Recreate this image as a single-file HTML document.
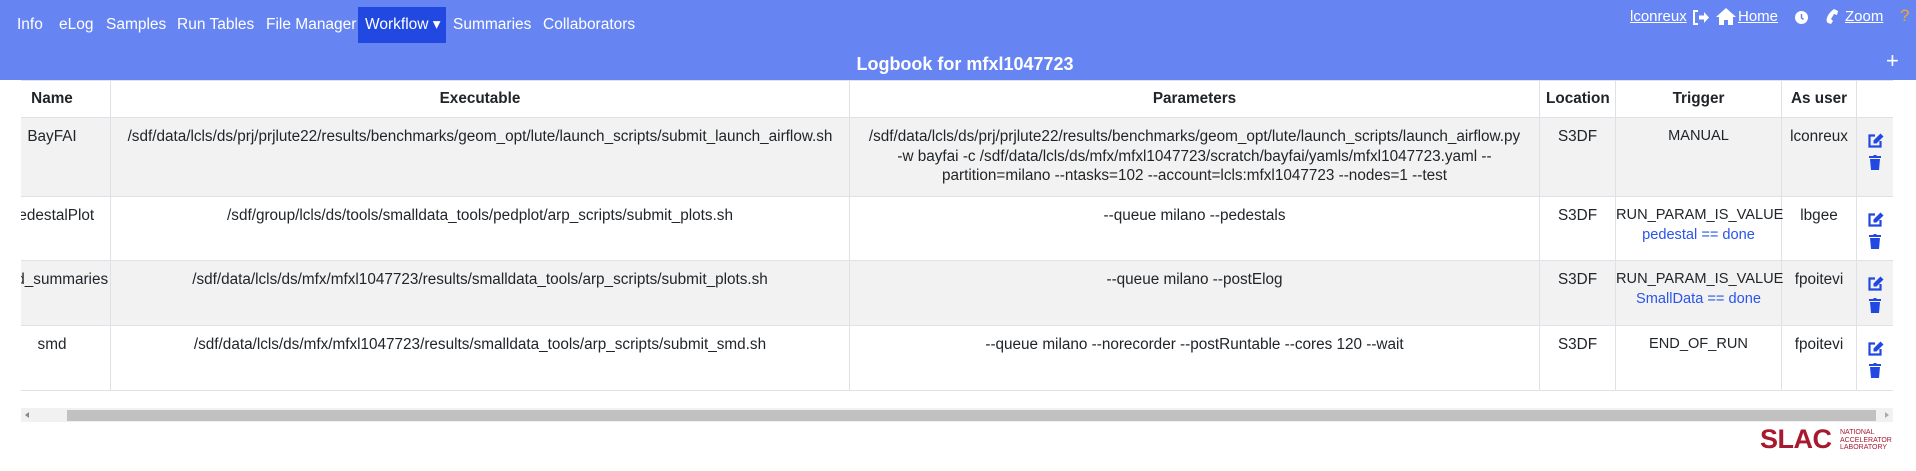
<!DOCTYPE html>
<html><head><meta charset="utf-8"><style>
*{box-sizing:border-box;margin:0;padding:0}
body{width:1916px;height:471px;background:#fff;font-family:"Liberation Sans",sans-serif;font-size:15.3px;color:#212529;position:relative;overflow:hidden}
.hdr{position:absolute;left:0;top:0;width:1916px;height:80px;background:#6685f3}
.nav{position:absolute;top:7px;height:36px;line-height:36px;color:#fff;font-size:15.5px}
.nav span{position:absolute;white-space:nowrap}
.wf{background:#2148e0;top:7px;height:36px;position:absolute;left:358px;width:88px}
.title{position:absolute;top:54px;left:0;width:1916px;text-align:center;color:#fff;font-weight:bold;font-size:18px;padding-left:14px}
.rt{position:absolute;top:8px;color:#fff;font-size:15px;text-decoration:underline;white-space:nowrap}
.wrap{position:absolute;left:21px;top:80px;width:1872px;height:311px;overflow:hidden}
table{border-collapse:collapse;position:absolute;left:-1px;top:0;width:1873px;table-layout:fixed}
td,th{border:1px solid #dee2e6;vertical-align:top;text-align:center;padding:9px 6px 0;line-height:19.5px}
th{height:37px;font-weight:bold;padding-top:8px}
tr.g td{background:#f2f2f2}
.nm{display:flex;justify-content:center;width:62px;white-space:nowrap;margin-left:-6px}
.b{color:#2a55e8}
.nw{white-space:nowrap;padding-left:0;padding-right:0}
.tg{font-size:14.6px}
.ic{display:block;margin:6px auto 0}
.sb{position:absolute;left:21px;top:408px;width:1872px;height:14px;background:#f1f1f1}
.th{position:absolute;left:46px;top:2px;width:1809px;height:11px;background:#c1c1c1}
</style></head><body>
<div class="hdr"></div>
<div class="wf"></div>
<div class="nav">
<span style="left:17px">Info</span><span style="left:59px">eLog</span><span style="left:106px">Samples</span><span style="left:177px">Run Tables</span><span style="left:266px">File Manager</span><span style="left:365px">Workflow ▾</span><span style="left:453px">Summaries</span><span style="left:543px">Collaborators</span>
</div>
<div class="rt" style="left:1630px">lconreux</div>
<svg style="position:absolute;left:1692px;top:10px" width="17" height="15" viewBox="0 0 17 15"><path d="M6 1H2v13h4" stroke="#fff" stroke-width="2" fill="none"/><path d="M7 5.5h5V2l5 5.5-5 5.5V9.5H7z" fill="#fff"/></svg>
<svg style="position:absolute;left:1716px;top:8px" width="20" height="17" viewBox="0 0 20 17"><path d="M10 0L0 9h3v8h5v-5h4v5h5V9h3z" fill="#fff"/></svg>
<div class="rt" style="left:1738px">Home</div>
<svg style="position:absolute;left:1795px;top:11px" width="13" height="13" viewBox="0 0 13 13"><circle cx="6.5" cy="6.5" r="6.5" fill="#fff"/><path d="M6.5 3v4l2 1.5" stroke="#6685f3" stroke-width="1.5" fill="none"/></svg>
<svg style="position:absolute;left:1823px;top:9px" width="16" height="16" viewBox="0 0 16 16"><path d="M11 0l4 2-1 4-3-1-3 5 2 2-2 3-3-1C2 12 4 5 11 0z" fill="#fff"/></svg>
<div class="rt" style="left:1845px">Zoom</div>
<div style="position:absolute;left:1900px;top:6px;color:#f5a623;font-size:17px">?</div>
<div class="title">Logbook for mfxl1047723</div>
<div style="position:absolute;left:1886px;top:48px;color:#fff;font-size:22px;font-weight:300">+</div>
<div class="wrap"><table>
<colgroup><col style="width:90px"><col style="width:739px"><col style="width:690px"><col style="width:76px"><col style="width:166px"><col style="width:75px"><col style="width:37px"></colgroup>
<tr><th><div class="nm">Name</div></th><th>Executable</th><th>Parameters</th><th>Location</th><th>Trigger</th><th>As user</th><th></th></tr>
<tr class="g" style="height:79px"><td><div class="nm">BayFAI</div></td><td class="nw">/sdf/data/lcls/ds/prj/prjlute22/results/benchmarks/geom_opt/lute/launch_scripts/submit_launch_airflow.sh</td><td class="nw">/sdf/data/lcls/ds/prj/prjlute22/results/benchmarks/geom_opt/lute/launch_scripts/launch_airflow.py<br>-w bayfai -c /sdf/data/lcls/ds/mfx/mfxl1047723/scratch/bayfai/yamls/mfxl1047723.yaml --<br>partition=milano --ntasks=102 --account=lcls:mfxl1047723 --nodes=1 --test</td><td>S3DF</td><td class="nw tg">MANUAL</td><td>lconreux</td><td><svg class="ic" width="17" height="16" viewBox="0 0 17 16"><path d="M8 2.5H2.5v11h11V8" stroke="#2148e0" stroke-width="2.2" fill="none"/><path d="M13.5 0.5l3 3-7 7H6.5v-3z" fill="#2148e0"/></svg><svg class="ic" style="margin-top:5px" viewBox="0 0 14 16" width="14" height="16"><path d="M1 2h4l1-1h2l1 1h4v2H1z M2 5h10l-1 11H3z" fill="#2148e0"/></svg></td></tr>
<tr style="height:64px"><td><div class="nm">pedestalPlot</div></td><td class="nw">/sdf/group/lcls/ds/tools/smalldata_tools/pedplot/arp_scripts/submit_plots.sh</td><td>--queue milano --pedestals</td><td>S3DF</td><td class="nw tg">RUN_PARAM_IS_VALUE<br><span class="b">pedestal == done</span></td><td>lbgee</td><td><svg class="ic" width="17" height="16" viewBox="0 0 17 16"><path d="M8 2.5H2.5v11h11V8" stroke="#2148e0" stroke-width="2.2" fill="none"/><path d="M13.5 0.5l3 3-7 7H6.5v-3z" fill="#2148e0"/></svg><svg class="ic" style="margin-top:5px" viewBox="0 0 14 16" width="14" height="16"><path d="M1 2h4l1-1h2l1 1h4v2H1z M2 5h10l-1 11H3z" fill="#2148e0"/></svg></td></tr>
<tr class="g" style="height:65px"><td><div class="nm">smd_summaries</div></td><td class="nw">/sdf/data/lcls/ds/mfx/mfxl1047723/results/smalldata_tools/arp_scripts/submit_plots.sh</td><td>--queue milano --postElog</td><td>S3DF</td><td class="nw tg">RUN_PARAM_IS_VALUE<br><span class="b">SmallData == done</span></td><td>fpoitevi</td><td><svg class="ic" width="17" height="16" viewBox="0 0 17 16"><path d="M8 2.5H2.5v11h11V8" stroke="#2148e0" stroke-width="2.2" fill="none"/><path d="M13.5 0.5l3 3-7 7H6.5v-3z" fill="#2148e0"/></svg><svg class="ic" style="margin-top:5px" viewBox="0 0 14 16" width="14" height="16"><path d="M1 2h4l1-1h2l1 1h4v2H1z M2 5h10l-1 11H3z" fill="#2148e0"/></svg></td></tr>
<tr style="height:65px"><td><div class="nm">smd</div></td><td class="nw">/sdf/data/lcls/ds/mfx/mfxl1047723/results/smalldata_tools/arp_scripts/submit_smd.sh</td><td>--queue milano --norecorder --postRuntable --cores 120 --wait</td><td>S3DF</td><td class="nw tg">END_OF_RUN</td><td>fpoitevi</td><td><svg class="ic" width="17" height="16" viewBox="0 0 17 16"><path d="M8 2.5H2.5v11h11V8" stroke="#2148e0" stroke-width="2.2" fill="none"/><path d="M13.5 0.5l3 3-7 7H6.5v-3z" fill="#2148e0"/></svg><svg class="ic" style="margin-top:5px" viewBox="0 0 14 16" width="14" height="16"><path d="M1 2h4l1-1h2l1 1h4v2H1z M2 5h10l-1 11H3z" fill="#2148e0"/></svg></td></tr>
</table></div>
<div class="sb"><div class="th"></div><div style="position:absolute;left:4px;top:4px;border:3px solid transparent;border-right:4px solid #888;border-left:0"></div><div style="position:absolute;right:4px;top:4px;border:3px solid transparent;border-left:4px solid #aaa;border-right:0"></div></div>
<div style="position:absolute;left:1760px;top:425px;color:#a6192e;font-weight:900;font-size:27px;letter-spacing:-0.5px;line-height:28px">SLAC</div>
<div style="position:absolute;left:1840px;top:429px;color:#a6192e;font-size:7px;line-height:7.5px">NATIONAL<br>ACCELERATOR<br>LABORATORY</div>
</body></html>
